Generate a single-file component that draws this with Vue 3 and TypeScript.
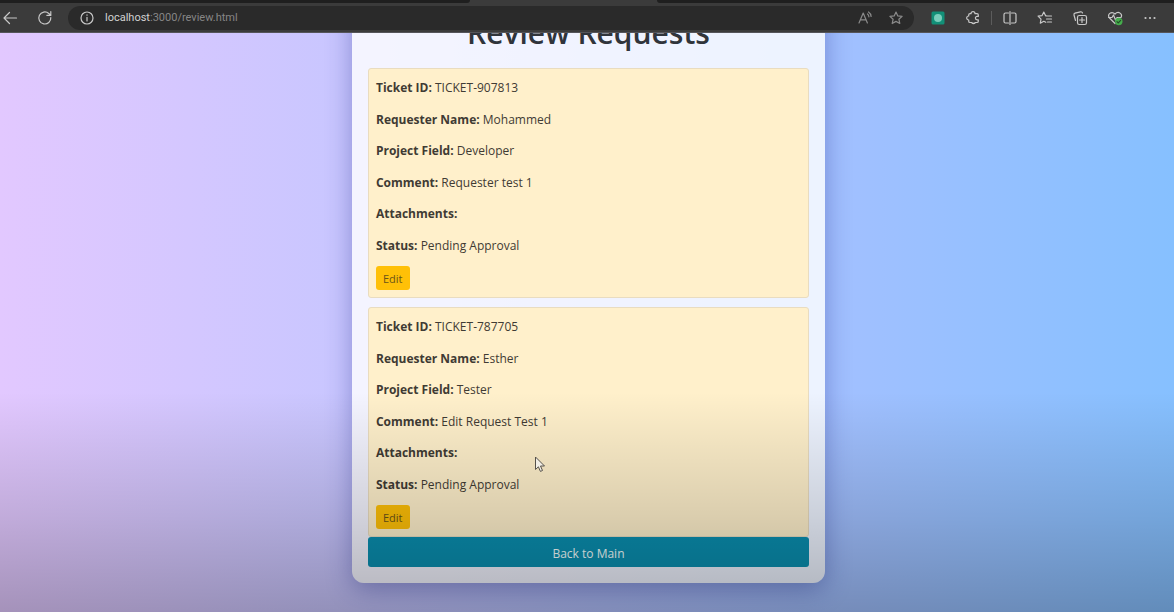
<script setup lang="ts">
interface Ticket {
  id: string
  requester: string
  field: string
  comment: string
  attachments: string
  status: string
}

const tickets: Ticket[] = [
  {
    id: 'TICKET-907813',
    requester: 'Mohammed',
    field: 'Developer',
    comment: 'Requester test 1',
    attachments: '',
    status: 'Pending Approval',
  },
  {
    id: 'TICKET-787705',
    requester: 'Esther',
    field: 'Tester',
    comment: 'Edit Request Test 1',
    attachments: '',
    status: 'Pending Approval',
  },
]

const rows: { label: string; key: keyof Ticket }[] = [
  { label: 'Ticket ID', key: 'id' },
  { label: 'Requester Name', key: 'requester' },
  { label: 'Project Field', key: 'field' },
  { label: 'Comment', key: 'comment' },
  { label: 'Attachments', key: 'attachments' },
  { label: 'Status', key: 'status' },
]
</script>

<template>
  <div class="browser">
    <header class="chrome">
      <div class="tabs">
        <span class="tab-side left"></span>
        <span class="tab-active"></span>
        <span class="tab-side right"></span>
      </div>
      <div class="toolbar">
        <button class="tool" type="button" aria-label="Back">
          <svg viewBox="0 0 16 16"><path d="M14.5 8H2M7.500 2.500L2 8l5.500 5.500" /></svg>
        </button>
        <button class="tool" type="button" aria-label="Refresh">
          <svg viewBox="0 0 16 16"><path d="M13.800 7.500A6 6 0 1 1 11.800 3.500L13.600 5.200M13.800 1.500v3.900H9.900" /></svg>
        </button>
        <div class="address">
          <button class="tool" type="button" aria-label="Site information">
            <svg viewBox="0 0 16 16"><circle cx="8" cy="8" r="6" /><path d="M8 7.300v3.700M8 4.800v.4" /></svg>
          </button>
          <span class="url"><b>localhost</b>:3000/review.html</span>
          <button class="tool dim" type="button" aria-label="Read aloud">
            <svg viewBox="0 0 16 16"><path d="M2 13L6.200 3l4.200 10M3.400 9.800h5.600M10.500 4q1.300 1 1.400 2.800M11.500 2q2.400 1.500 2.600 4.500" /></svg>
          </button>
          <button class="tool dim" type="button" aria-label="Add to favorites">
            <svg viewBox="0 0 16 16"><path d="M8 2l1.800 3.900 4.300.5-3.200 2.900.9 4.200L8 11.400l-3.800 2.100.9-4.200L1.900 6.400l4.300-.5z" /></svg>
          </button>
        </div>
        <div class="group">
          <button class="tool" type="button" aria-label="Extension">
            <svg viewBox="0 0 16 16"><rect class="ext" x="1.500" y="1.500" width="13" height="13" rx="1.500" /><circle class="ext-dot" cx="8" cy="8" r="4" /></svg>
          </button>
          <button class="tool" type="button" aria-label="Extensions">
            <svg viewBox="0 0 16 16"><path d="M6 3.700a2 2 0 0 1 4 0h2q1.300 0 1.300 1.300v1.400h-1.200a1.700 1.700 0 0 0 0 3.400h1.200v1.400q0 1.300-1.300 1.300h-1.500q-2 2-4 0H5q-1.300 0-1.300-1.300V10a2 2 0 0 1 0-4V5q0-1.300 1.300-1.300z" /></svg>
          </button>
        </div>
        <span class="divider"></span>
        <div class="group">
          <button class="tool" type="button" aria-label="Split screen">
            <svg viewBox="0 0 16 16"><path d="M6.500 3H3.500Q2 3 2 4.500v7Q2 13 3.500 13h3M9.500 3h3Q14 3 14 4.500v7q0 1.500-1.500 1.500h-3M8 1.500v13" /></svg>
          </button>
          <button class="tool" type="button" aria-label="Favorites">
            <svg viewBox="0 0 16 16"><path d="M9.500 5.800h-.900L6.800 2 5.100 5.600l-4 .6 2.900 2.900-.7 4.100 3.500-1.900 2 1M9.800 6h4.700M9.500 9h5M10.500 12h4" /></svg>
          </button>
          <button class="tool" type="button" aria-label="Collections">
            <svg viewBox="0 0 16 16"><rect x="5.500" y="5.500" width="9" height="9" rx="1.800" /><path d="M10 7.500v5M7.500 10h5M3.500 10.500L2 5Q1.600 3.500 3 3.100L8.500 1.800Q10 1.500 10.500 3" /></svg>
          </button>
          <button class="tool" type="button" aria-label="Browser essentials">
            <svg viewBox="0 0 16 16"><path d="M8 13.500L2.500 8C-.5 4.500 4.500.5 8 4c3.500-3.500 8 0 6 3.500M1.500 7.500H5l1.500-2.500 2 5 1.500-2.500h3" /><circle class="ok" cx="11.800" cy="11.500" r="3.700" /><path class="tick" d="M10 11.600l1.300 1.300 2.300-2.500" /></svg>
          </button>
          <button class="tool" type="button" aria-label="Settings and more">
            <svg viewBox="0 0 16 16"><g class="dots"><circle cx="3.500" cy="8" r="1.100" /><circle cx="8" cy="8" r="1.100" /><circle cx="12.500" cy="8" r="1.100" /></g></svg>
          </button>
        </div>
      </div>
    </header>

    <main class="page">
      <section class="card">
        <h1>Review Requests</h1>
        <ul class="tickets">
          <li v-for="ticket in tickets" :key="ticket.id" class="ticket">
            <p v-for="row in rows" :key="row.key">
              <strong>{{ row.label }}:</strong> {{ ticket[row.key] }}
            </p>
            <button class="edit" type="button">Edit</button>
          </li>
        </ul>
        <a class="back" href="#main">Back to Main</a>
      </section>
      <div class="shade"></div>
    </main>

    <svg class="pointer" viewBox="0 0 12 17" aria-hidden="true">
      <path d="M1.500 1v12.500l2.900-2.700 2 4.600 2.100-.9-2-4.500h4z" />
    </svg>
  </div>
</template>

<style>
body {
  margin: 0;
}
</style>

<style scoped>
.browser {
  display: flex;
  flex-direction: column;
  height: 100vh;
  overflow: hidden;
  position: relative;
  font-family: "Open Sans", "Noto Sans", sans-serif;
  font-size: 12px;
  color: #3f3b34;
}

.chrome {
  flex: none;
  background: #3b3b3b;
  border-bottom: 1px solid #55555a;
}

.tabs {
  display: flex;
  height: 3px;
}

.tab-side {
  background: #1f1f1f;
}

.left {
  flex: 40;
  border-bottom-right-radius: 4px;
}

.tab-active {
  flex: 16;
}

.right {
  flex: 44;
  border-bottom-left-radius: 4px;
}

.toolbar {
  display: flex;
  align-items: center;
  height: 29px;
  padding: 0 16px 0 2px;
}

.tool {
  flex: none;
  width: 16px;
  height: 16px;
  padding: 0;
  border: 0;
  background: none;
  color: #c8c8c8;
}

.tool + .tool {
  margin-left: 19px;
}

.tool svg {
  display: block;
  width: 16px;
  height: 16px;
  fill: none;
  stroke: currentColor;
  stroke-width: 1.2;
  stroke-linecap: round;
  stroke-linejoin: round;
}

.tool.dim {
  color: #8a8a8a;
}

.tool .ext {
  fill: #129078;
  stroke: none;
}

.tool .ext-dot {
  fill: #79cdbb;
  stroke: none;
}

.tool .ok {
  fill: #45ad4c;
  stroke: none;
}

.tool .tick {
  stroke: #244d27;
}

.dots {
  fill: currentColor;
  stroke: none;
}

.address {
  flex: 1;
  display: flex;
  align-items: center;
  height: 24px;
  margin: 0 16px 0 15px;
  padding: 0 10px 0 11px;
  border-radius: 12px;
  background: #2a2a2a;
}

.address .dim + .dim {
  margin-left: 15px;
}

.url {
  flex: 1;
  margin-left: 10px;
  font-family: Roboto, "Open Sans", sans-serif;
  font-size: 11px;
  color: #868686;
}

.url b {
  font-weight: 400;
  color: #d2d2d2;
}

.group {
  display: flex;
}

.divider {
  width: 1px;
  height: 14px;
  margin: 0 10px;
  background: #5c5c5c;
}

.page {
  flex: 1;
  min-height: 0;
  position: relative;
  display: flex;
  flex-direction: column;
  justify-content: flex-end;
  align-items: center;
  overflow: hidden;
  padding: 0 0 29px 3px;
  background: linear-gradient(to right, #e2c8ff, #c6c6ff 32%, #a1c0ff 72%, #86c0ff);
}

.card {
  flex: none;
  box-sizing: border-box;
  width: 40.4%;
  padding: 16px;
  border-radius: 12px;
  background: rgba(255, 255, 255, 0.8);
  box-shadow: 0 6px 26px rgba(31, 38, 135, 0.37);
}

h1 {
  margin: 0 0 17px;
  font-size: 30px;
  line-height: 36px;
  font-weight: 600;
  text-align: center;
  color: #30343b;
}

.tickets {
  display: grid;
  gap: 9px;
  margin: 0;
  padding: 0;
  list-style: none;
}

.ticket {
  padding: 9px 7px 7px;
  border: 1px solid #e9dcc0;
  border-radius: 3px;
  background: #fff0cb;
}

.ticket p {
  margin: 0 0 12px;
  line-height: 1.625;
}

.ticket p:last-of-type {
  margin-bottom: 11px;
}

.edit {
  display: block;
  height: 24px;
  padding: 0 7px;
  border: 0;
  border-radius: 3px;
  background: #ffc007;
  font: inherit;
  font-size: 11px;
  color: #6b5418;
}

.back {
  display: block;
  padding-top: 3px;
  border-radius: 3px;
  background: #0a8fb0;
  line-height: 27px;
  text-align: center;
  text-decoration: none;
  color: #f4ffff;
}

.shade {
  position: absolute;
  inset: 62% 0 0;
  pointer-events: none;
  background: linear-gradient(to bottom, rgba(0, 0, 0, 0), rgba(0, 0, 0, 0.14) 56%, rgba(0, 0, 0, 0.27));
}

.pointer {
  position: absolute;
  left: 534px;
  top: 456px;
  width: 12px;
  height: 17px;
  fill: #f1eee6;
  stroke: #55514a;
  stroke-width: 1;
}
</style>
